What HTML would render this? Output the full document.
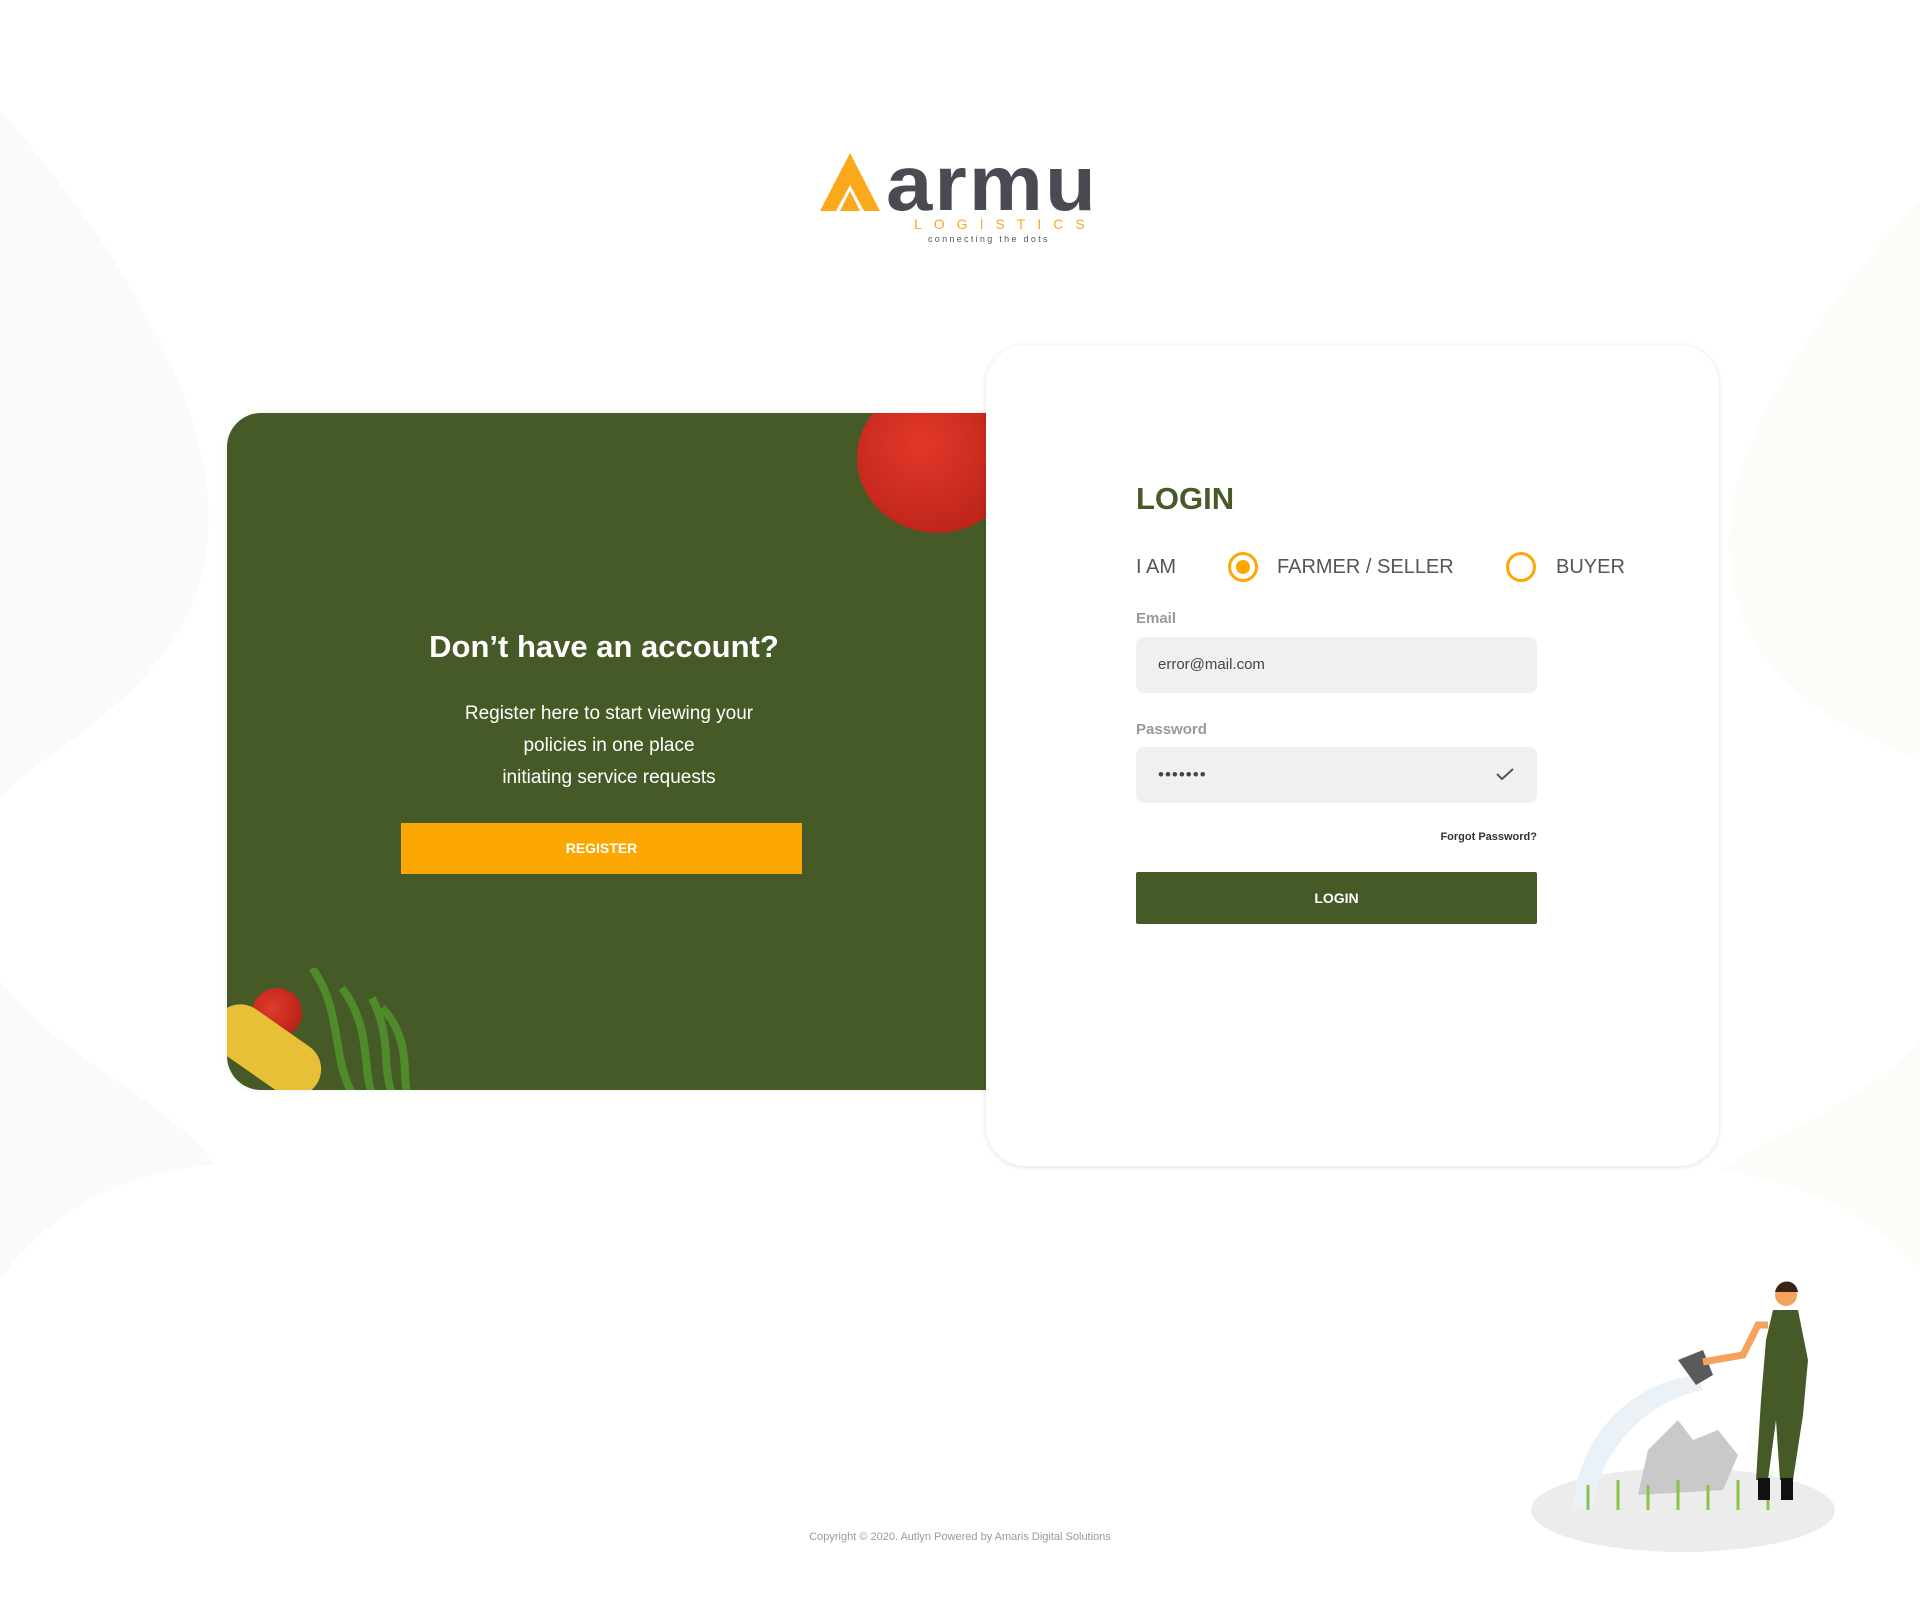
<!DOCTYPE html>
<html><head><meta charset="utf-8"><style>
*{margin:0;padding:0;box-sizing:border-box}
body{width:1920px;height:1622px;background:#fff;font-family:"Liberation Sans",Arial,sans-serif;position:relative;overflow:hidden}
.a{position:absolute}
</style></head><body>
<svg class="a" style="left:0;top:0" width="1920" height="1622">
<path d="M0 110 C120 250 230 420 205 560 C180 700 20 760 0 800 Z" fill="#fafafa"/>
<path d="M0 980 C60 1060 170 1100 215 1165 C120 1170 40 1220 0 1280 Z" fill="#fafafa"/>
<path d="M1920 200 C1800 330 1720 460 1730 560 C1740 700 1880 740 1920 760 Z" fill="#fefcf8"/>
<path d="M1920 1040 C1870 1100 1780 1130 1720 1170 C1800 1180 1880 1220 1920 1270 Z" fill="#fefcf8"/>
</svg>
<!-- logo -->
<svg class="a" style="left:820px;top:153px" width="290" height="92">
<polygon points="30,0 60,58 44,58 30,32 16,58 0,58" fill="#f9a91b"/>
<polygon points="30,38 40,58 20,58" fill="#f9a91b"/>
<text x="66" y="57" font-family="Liberation Sans" font-weight="bold" font-size="78" fill="#4a4b52" letter-spacing="2" textLength="212" lengthAdjust="spacingAndGlyphs">armu</text>
<text x="94" y="76" font-size="14" fill="#f9a91b" letter-spacing="12" font-family="Liberation Sans">LOGISTICS</text>
<text x="108" y="89" font-size="9" fill="#555" letter-spacing="2.3" font-family="Liberation Sans">connecting the dots</text>
</svg>
<!-- green card -->
<div class="a" style="left:227px;top:413px;width:780px;height:677px;background:#465a28;border-radius:34px 0 0 34px;box-shadow:0 0 6px rgba(0,0,0,.08);overflow:hidden">
<div class="a" style="left:630px;top:-30px;width:160px;height:150px;border-radius:50%;background:radial-gradient(circle at 40% 40%,#e2382a,#b01d14)"></div>
<div class="a" style="left:25px;top:575px;width:50px;height:50px;border-radius:50%;background:radial-gradient(circle at 40% 40%,#e23b2a,#a71b12)"></div>
<div class="a" style="left:-20px;top:610px;width:120px;height:55px;border-radius:40px;background:#e8c038;transform:rotate(35deg)"></div>
<svg class="a" style="left:75px;top:555px" width="110" height="125"><path d="M10 0 C40 40 30 90 50 125 M40 20 C70 60 60 100 70 125 M70 30 C90 70 80 100 90 125 M80 40 C110 70 100 110 105 125" stroke="#4f8a2b" stroke-width="8" fill="none"/></svg>
<div class="a" style="left:0;top:216px;width:754px;text-align:center;color:#fff;font-weight:bold;font-size:31px">Don’t have an account?</div>
<div class="a" style="left:0;top:285px;width:764px;text-align:center;color:#fff;font-size:19px;line-height:32px">Register here to start viewing your<br>policies in one place<br>initiating service requests</div>
<div class="a" style="left:174px;top:410px;width:401px;height:51px;background:#fda702;color:#fff;font-weight:bold;font-size:14px;text-align:center;line-height:51px">REGISTER</div>
</div>
<!-- white card -->
<div class="a" style="left:986px;top:345px;width:733px;height:821px;background:#fff;border-radius:40px;box-shadow:0 1px 6px rgba(0,0,0,.12)">
<div class="a" style="left:150px;top:136px;color:#465a28;font-weight:bold;font-size:31px">LOGIN</div>
<div class="a" style="left:150px;top:211px;color:#555;font-size:20px">I AM</div>
<div class="a" style="left:242px;top:207px;width:30px;height:30px;border:3px solid #fda702;border-radius:50%"><div style="margin:5px;width:14px;height:14px;border-radius:50%;background:#fda702"></div></div>
<div class="a" style="left:291px;top:211px;color:#555;font-size:20px">FARMER / SELLER</div>
<div class="a" style="left:520px;top:207px;width:30px;height:30px;border:3px solid #fda702;border-radius:50%"></div>
<div class="a" style="left:570px;top:211px;color:#555;font-size:20px">BUYER</div>
<div class="a" style="left:150px;top:265px;color:#999;font-size:15px;font-weight:bold">Email</div>
<div class="a" style="left:150px;top:292px;width:401px;height:56px;background:#f0f0f0;border-radius:8px;padding-left:22px;line-height:56px;font-size:15px;color:#444">error@mail.com</div>
<div class="a" style="left:150px;top:376px;color:#999;font-size:15px;font-weight:bold">Password</div>
<div class="a" style="left:150px;top:402px;width:401px;height:56px;background:#f0f0f0;border-radius:8px;padding-left:22px;line-height:56px;font-size:17px;color:#444;letter-spacing:1px">•••••••
<svg class="a" style="right:22px;top:20px" width="20" height="14"><path d="M2 7 L7 12 L18 2" stroke="#555" stroke-width="2" fill="none"/></svg></div>
<div class="a" style="left:150px;top:486px;width:401px;text-align:right;color:#333;font-size:11px;font-weight:bold">Forgot Password?</div>
<div class="a" style="left:150px;top:527px;width:401px;height:52px;background:#465a28;color:#fff;font-weight:bold;font-size:14px;text-align:center;line-height:52px;border-radius:2px">LOGIN</div>
</div>
<div class="a" style="left:0;top:1531px;width:1920px;text-align:center;color:#999;font-size:11px">Copyright © 2020. Autlyn Powered by Amaris Digital Solutions</div>
<!-- farmer illustration -->
<svg class="a" style="left:1528px;top:1280px" width="310" height="280">
<ellipse cx="155" cy="230" rx="152" ry="42" fill="#ececec"/>
<path d="M45 230 C50 150 110 100 170 95 L175 110 C120 120 70 170 65 230 Z" fill="#eaf2f8"/>
<path d="M120 170 L150 140 L165 160 L190 150 L210 175 L195 210 L110 215 Z" fill="#c9c9c9"/>
<g stroke="#8bc34a" stroke-width="3"><path d="M60 230 V205 M90 230 V200 M120 230 V205 M150 230 V200 M180 230 V205 M210 230 V200 M240 230 V205"/></g>
<polygon points="150,80 175,70 185,95 168,105" fill="#5a5a5a"/>
<path d="M175 82 L215 75 L230 45 L240 45" stroke="#f4a25c" stroke-width="7" fill="none"/>
<circle cx="258" cy="15" r="11" fill="#f4a25c"/><path d="M247 12 C250 -2 268 -2 270 12 Z" fill="#3a2418"/>
<path d="M245 30 L270 30 L280 80 L275 135 L265 200 L252 200 L248 140 L240 200 L228 200 L233 120 L238 60 Z" fill="#465a28"/>
<rect x="230" y="198" width="12" height="22" fill="#111"/><rect x="253" y="198" width="12" height="22" fill="#111"/>
</svg>
</body></html>
